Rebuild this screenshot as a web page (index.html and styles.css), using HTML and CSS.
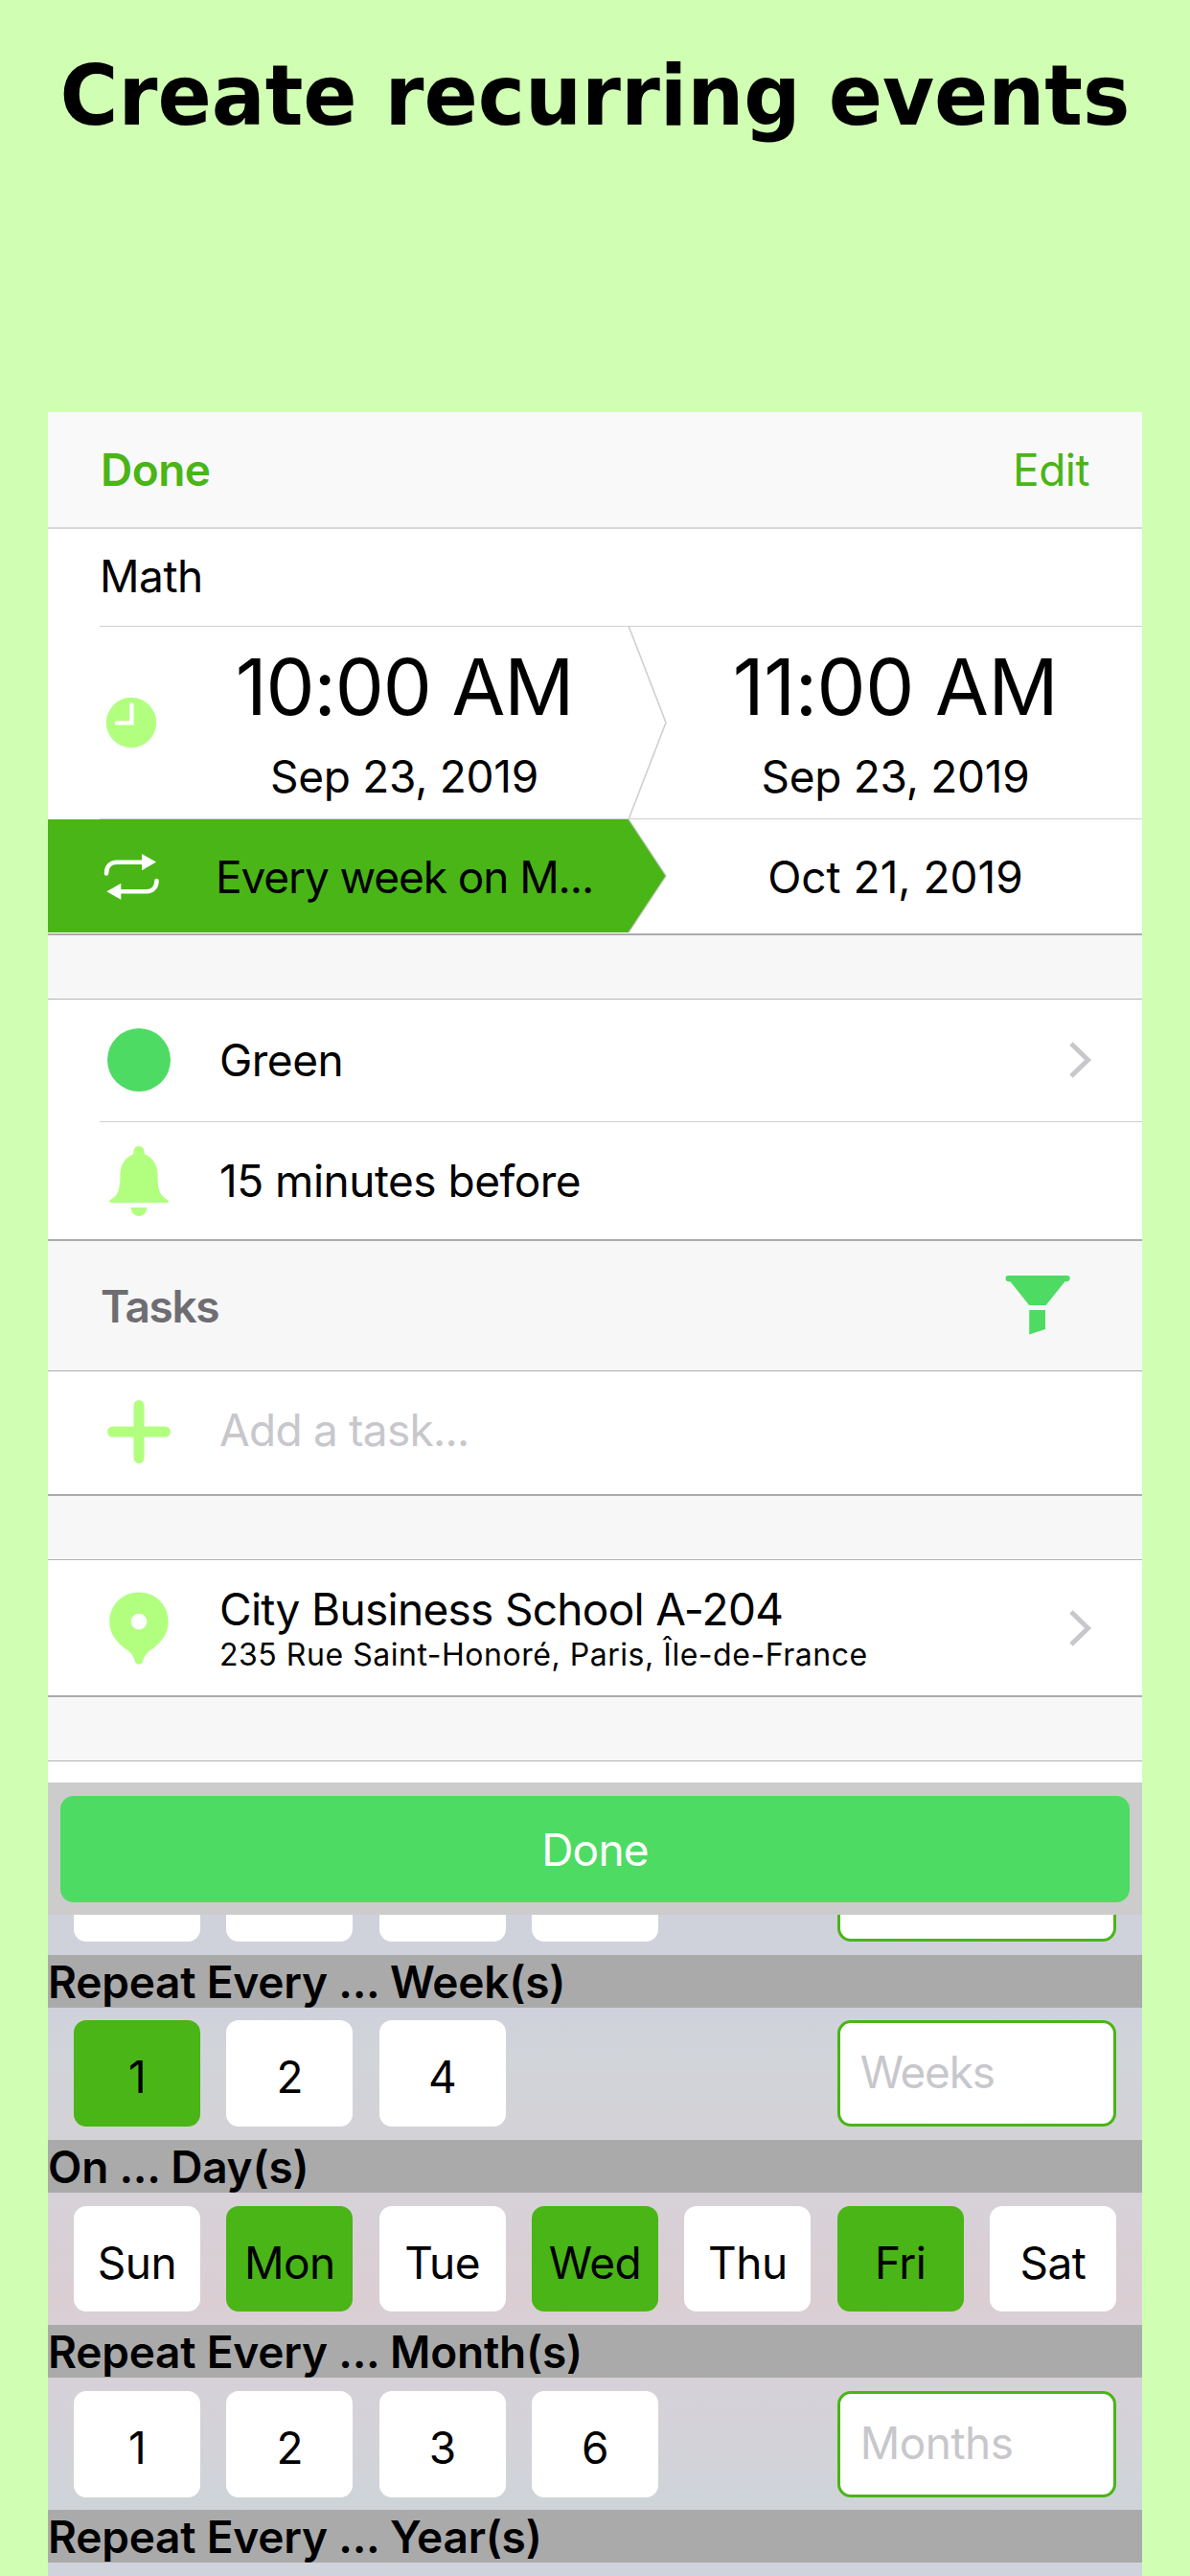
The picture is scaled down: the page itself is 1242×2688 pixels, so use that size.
FILE: index.html
```
<!DOCTYPE html>
<html lang="en">

<head>
    <meta charset="UTF-8">
    <meta name="viewport" content="width=device-width, initial-scale=1.0">
    <title>Create recurring events</title>
    <link rel="stylesheet" href="styles.css">
</head>

<body>
    <h1 class="title">Create recurring events</h1>
    <div class="phone">
        <div class="nav">
            <a class="nav_done">Done</a>
            <a>Edit</a>
        </div>

        <div class="name">Math</div>
        <div class="line"></div>
        <div class="time">
            <svg class="icon_clock" width="54" height="54" viewBox="0 0 54 54">
                <circle cx="27" cy="27" r="26.2" fill="#b2ff80" />
                <path d="M27.4 8.4V27.4H11.8" fill="none" stroke="#fff" stroke-width="4.4" stroke-linecap="round" />
            </svg>
            <div class="time_cell">
                <p class="hour hour_l">10:00 AM</p>
                <p class="date">Sep 23, 2019</p>
            </div>
            <div class="time_cell time_end">
                <p class="hour">11:00 AM</p>
                <p class="date">Sep 23, 2019</p>
            </div>
            <svg class="divider" width="42" height="202" viewBox="0 0 42 202">
                <path d="M1 0L40 101L1 202" fill="none" stroke="#cfcfd1" stroke-width="1.6" />
            </svg>
        </div>
        <div class="line"></div>
        <div class="repeat">
            <svg class="repeat_bg" width="648" height="118" viewBox="0 0 648 118">
                <path d="M0 0H606L645 59L606 118H0Z" fill="#4ab516" />
                <path d="M606 0L645 59L606 118" fill="none" stroke="#b5c4ae" stroke-width="1.2" />
            </svg>
            <svg class="icon_repeat" width="60" height="50" viewBox="0 0 60 50">
                <path d="M4 21.5C4 14 8 9.7 15 9.7H42M56.5 29C56.5 36 52 40.3 46 40.3H18" fill="none" stroke="#fff" stroke-width="4.6" stroke-linecap="round" />
                <path d="M41 1L56 9.6L41 18.2ZM19.3 31.8L4.3 40.3L19.3 48.8Z" fill="#fff" />
            </svg>
            <p class="date repeat_text">Every week on M...</p>
            <p class="date date_until">Oct 21, 2019</p>
        </div>

        <div class="gap"></div>
        <div class="row row_color">
            <div class="icon"><span class="dot"></span></div>
            <p>Green</p>
            <svg class="arrow" width="24" height="38" viewBox="0 0 24 38">
                <path d="M2 2L19.5 19L2 36" fill="none" stroke="#c7c7cc" stroke-width="5" />
            </svg>
        </div>
        <div class="line"></div>
        <div class="row row_bell">
            <div class="icon">
                <svg width="64" height="74" viewBox="0 0 64 74">
                    <path d="M26.2 9.2C25.9 4.3 28 1 32 1C36 1 38.1 4.3 37.8 9.2C46 12.5 51 20 51.5 29C51.7 37 51.5 45 55 51C57 54.3 59.5 55.3 61.8 57C63.6 58.5 62.8 60 61 60H3C1.2 60 .4 58.5 2.2 57C4.5 55.3 7 54.3 9 51C12.5 45 12.3 37 12.5 29C13 20 18 12.5 26.2 9.2Z" fill="#b2ff80" />
                    <path d="M23.6 65H40.4C40.4 70 36.5 74 32 74C27.5 74 23.6 70 23.6 65Z" fill="#b2ff80" />
                </svg>
            </div>
            <p>15 minutes before</p>
        </div>

        <div class="tasks">
            <h2>Tasks</h2>
            <svg class="icon_filter" width="68" height="62" viewBox="0 0 68 62">
                <path d="M3.3 0H64.7Q67.7 0 67.7 3T64.2 6.2H62.5L42.6 31H25.2L5.4 6.2H3.6Q.5 6 .5 3T3.3 0Z" fill="#4ddb64" />
                <path d="M25.2 36H42V56L25.2 61.5Z" fill="#4ddb64" />
            </svg>
        </div>
        <div class="row row_add">
            <div class="icon">
                <svg width="66" height="66" viewBox="0 0 66 66">
                    <path d="M33 5.5V60.5M5.5 33H60.5" stroke="#b2ff80" stroke-width="11" stroke-linecap="round" />
                </svg>
            </div>
            <p class="hint">Add a task...</p>
        </div>

        <div class="gap"></div>
        <div class="row row_place">
            <div class="icon">
                <svg width="62" height="76" viewBox="0 0 62 76">
                    <path fill-rule="evenodd" d="M31 .5C14 .5 .3 13.5 .3 31C.3 44 7.5 52 16 59C23 63.5 25 66 27 73C28.2 76.5 33.8 76.5 35 73C37 66 39 63.5 46 59C54.5 52 61.7 44 61.7 31C61.7 13.5 48 .5 31 .5ZM31 22.8A8.3 8.3 0 1 1 31 39.4A8.3 8.3 0 1 1 31 22.8Z" fill="#b2ff80" />
                </svg>
            </div>
            <div class="place">
                <p class="place_name">City Business School A-204</p>
                <p class="place_addr">235 Rue Saint-Honoré, Paris, Île-de-France</p>
            </div>
            <svg class="arrow" width="24" height="38" viewBox="0 0 24 38">
                <path d="M2 2L19.5 19L2 36" fill="none" stroke="#c7c7cc" stroke-width="5" />
            </svg>
        </div>
        <div class="gap"></div>
        <div class="empty"></div>

        <div class="bar">
            <a class="bar_done">Done</a>
        </div>
        <div class="keyboard">
            <div class="keys keys_cut">
                <span class="key"></span>
                <span class="key"></span>
                <span class="key"></span>
                <span class="key"></span>
                <span class="field"></span>
            </div>
            <h3>Repeat Every ... Week(s)</h3>
            <div class="keys">
                <span class="key on">1</span>
                <span class="key">2</span>
                <span class="key">4</span>
                <span class="field field_week">Weeks</span>
            </div>
            <h3>On ... Day(s)</h3>
            <div class="keys">
                <span class="key">Sun</span>
                <span class="key on">Mon</span>
                <span class="key">Tue</span>
                <span class="key on">Wed</span>
                <span class="key">Thu</span>
                <span class="key on">Fri</span>
                <span class="key">Sat</span>
            </div>
            <h3>Repeat Every ... Month(s)</h3>
            <div class="keys">
                <span class="key">1</span>
                <span class="key">2</span>
                <span class="key">3</span>
                <span class="key">6</span>
                <span class="field">Months</span>
            </div>
            <h3>Repeat Every ... Year(s)</h3>
        </div>
    </div>
</body>

</html>
```
FILE: styles.css
```
* {
    padding: 0;
    margin: 0;
    box-sizing: border-box;
}

body {
    width: 1242px;
    height: 2688px;
    overflow: hidden;
    background-color: #d0ffb3;
    font-family: Inter, "Liberation Sans", sans-serif;
    font-size: 46px;
    letter-spacing: -.5px;
    color: #000;
}

svg {
    display: block;
    flex: none;
}

.title {
    height: 430px;
    padding-top: 48px;
    font: bold 88px/104px "DejaVu Sans", sans-serif;
    letter-spacing: 0;
    text-align: center;
    white-space: nowrap;
    transform: scaleX(.943);
}

.phone {
    width: 1142px;
    height: 2258px;
    margin: 0 auto;
    overflow: hidden;
    background-color: #fff;
}

.nav {
    display: flex;
    justify-content: space-between;
    align-items: center;
    height: 122px;
    padding: 0 55px 1px;
    background-color: #f9f9f9;
    border-bottom: 2px solid #d8d8d8;
    color: #4ab516;
}

.nav_done {
    font-weight: 600;
}

.name {
    height: 101px;
    padding: 0 54px;
    line-height: 98px;
}

.line {
    height: 1px;
    margin-left: 54px;
    background-color: #cfced3;
}

.time {
    position: relative;
    display: grid;
    grid-template-columns: 138px 468px 21px 515px;
    height: 200px;
}

.icon_clock {
    align-self: center;
    margin-left: 60px;
}

.time_cell {
    padding-top: 24px;
    text-align: center;
}

.time_end {
    grid-column: 4;
}

.hour {
    margin-bottom: 23px;
    font-size: 81px;
    line-height: 79px;
    letter-spacing: -.5px;
}

.hour_l {
    letter-spacing: -1.1px;
}

.date {
    line-height: 60px;
    letter-spacing: -.3px;
    text-align: center;
}

/* overlaps both halves of the row */
.divider {
    position: absolute;
    top: -1px;
    left: 605px;
}

.repeat {
    position: relative;
    display: grid;
    grid-template-columns: 138px 468px 21px 515px;
    align-items: center;
    height: 119px;
}

.repeat_bg {
    position: absolute;
    top: 0;
    left: 0;
}

.icon_repeat {
    position: relative;
    margin-left: 57px;
}

.repeat_text {
    position: relative;
    letter-spacing: -1.1px;
}

.date_until {
    grid-column: 4;
    letter-spacing: 0;
}

.gap {
    height: 69px;
    background-color: #f7f7f7;
    border-top: 2px solid #ababad;
    border-bottom: 1px solid #b3b3b5;
}

.row {
    display: flex;
    align-items: center;
    padding-right: 52px;
}

.icon {
    display: flex;
    flex: none;
    justify-content: center;
    width: 84px;
    margin: 0 42px 0 53px;
}

.dot {
    width: 66px;
    height: 66px;
    border-radius: 50%;
    background-color: #4ddb64;
}

.row p {
    flex: 1;
}

.arrow {
    margin-left: auto;
}

.row_color {
    height: 127px;
    padding-bottom: 1px;
}

.row_bell {
    height: 122px;
}

.tasks {
    display: flex;
    justify-content: space-between;
    align-items: center;
    height: 138px;
    padding: 0 75px 0 55px;
    background-color: #f7f7f7;
    border-top: 2px solid #ababad;
    border-bottom: 1px solid #acacae;
}

.tasks h2 {
    font-size: 46px;
    font-weight: 600;
    letter-spacing: -1.4px;
    color: #6d6d72;
}

.icon_filter {
    margin-bottom: 2px;
}

.row_add {
    height: 128px;
    padding-bottom: 2px;
}

.row .hint {
    padding-bottom: 4px;
    letter-spacing: -.75px;
    color: #c7c7cc;
}

.row_place {
    height: 141px;
}

.place {
    flex: 1;
}

.row .place_name {
    line-height: 56px;
    letter-spacing: -.7px;
}

.row .place_addr {
    font-size: 32px;
    line-height: 40px;
    letter-spacing: .53px;
    white-space: nowrap;
}

.empty {
    height: 22px;
}

.bar {
    height: 138px;
    padding: 13.5px 13px;
    background-color: #ccc;
}

.bar_done {
    display: block;
    height: 111px;
    border-radius: 14px;
    background-color: #4ddb64;
    line-height: 112px;
    letter-spacing: -.8px;
    text-align: center;
    color: #fff;
}

.keyboard {
    height: 690px;
    background: linear-gradient(#cfd2db 0, #cfd2dc 100px, #d1d4d8 150px, #d3d2d7 230px, #d7d1d8 300px, #daced3 400px, #d9d0d5 440px, #d6d1d8 490px, #d2d3d9 570px, #cfd4d9 610px, #d0d3db 690px);
}

.keyboard h3 {
    height: 55px;
    background-color: #aaa;
    font-size: 46px;
    font-weight: 600;
    line-height: 56px;
    letter-spacing: -.22px;
}

.keys {
    display: grid;
    grid-template-columns: repeat(7, 132px);
    justify-content: space-between;
    align-content: center;
    height: 138.3px;
    padding: 0 27px;
}

.keys_cut {
    align-content: end;
    height: 41.5px;
    padding-bottom: 14px;
    overflow: hidden;
}

.key {
    height: 110.6px;
    padding-top: 7px;
    border-radius: 13px;
    background-color: #fff;
    line-height: 105px;
    text-align: center;
}

.on {
    background-color: #4ab516;
}

.field {
    grid-column: 6 / 8;
    height: 110.6px;
    padding-left: 21px;
    border: 3px solid #4ab516;
    border-radius: 14px;
    background-color: #fff;
    line-height: 102px;
    color: #c7c7cc;
}

.field_week {
    letter-spacing: -1.2px;
}
```
